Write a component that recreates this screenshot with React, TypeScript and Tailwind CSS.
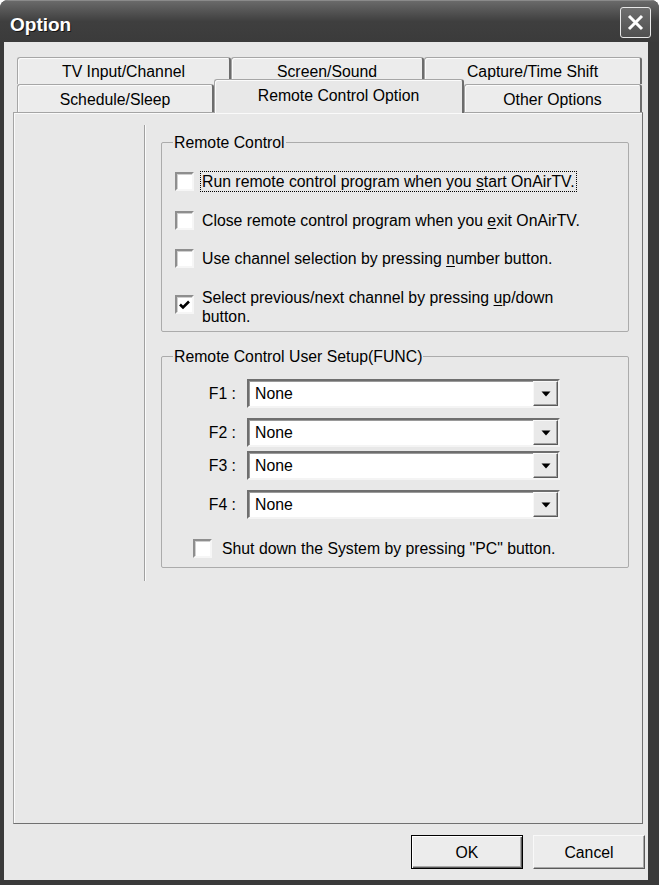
import React from 'react';

const font = "font-['Liberation_Sans',Arial,sans-serif]";

function CheckBox({ checked = false, className = "" }: { checked?: boolean; className?: string }) {
  return (
    <span className={`w-[19px] h-[19px] shrink-0 bg-white border-2 border-t-[#8e8e8e] border-l-[#8e8e8e] border-b-[#f6f6f6] border-r-[#f6f6f6] shadow-[inset_1px_1px_0_#cfcfcf] flex items-center justify-center ${className}`}>
      {checked && (
        <svg width="11" height="10" viewBox="0 0 11 10">
          <path d="M1 4.5 L4 7.5 L10 1.5" fill="none" stroke="#000" strokeWidth="2.6" />
        </svg>
      )}
    </span>
  );
}

function Combo({ label }: { label: string }) {
  return (
    <div className="flex items-center">
      <span className="w-[75px] text-right pr-[1px]">{label}</span>
      <div className="ml-[10px] w-[313px] h-[29px] flex bg-white border-2 border-t-[#6e6e6e] border-l-[#6e6e6e] border-b-[#f4f4f4] border-r-[#f4f4f4] shadow-[inset_1px_1px_0_#9a9a9a]">
        <span className="flex-1 flex items-center pl-[6px]">None</span>
        <span className="w-[25px] h-full bg-[#e9e9e9] border border-t-[#f8f8f8] border-l-[#f8f8f8] border-b-[#5a5a5a] border-r-[#5a5a5a] shadow-[inset_-1px_-1px_0_#a0a0a0] flex items-center justify-center">
          <svg width="10" height="6" viewBox="0 0 10 6">
            <path d="M0.5 0.5 L9.5 0.5 L5 5.5 Z" fill="#000" />
          </svg>
        </span>
      </div>
    </div>
  );
}

const tab = "h-full flex items-center justify-center bg-[#ececec] border-t border-l border-[#a6a6a6] border-r-2 border-r-[#6c6c6c] rounded-t-[3px] shadow-[inset_1px_1px_0_#fbfbfb]";

export default function App() {
  return (
    <div className={`w-[659px] h-[885px] bg-white ${font} text-[15.8px] leading-[19px] text-black`}>
      <div className="h-full flex flex-col rounded-t-[8px] overflow-hidden bg-[#3a3a3a]">
        {/* Title bar */}
        <div className="h-[42px] shrink-0 flex items-center justify-between pl-[10px] pr-[8px] bg-gradient-to-b from-[#6a6a6a] via-[#3f3f3f] to-[#3b3b3b] border-t border-[#8a8a8a]">
          <span className="pt-[5px] text-[19px] font-bold text-white [text-shadow:1px_1px_0_#151515]">Option</span>
          <span className="w-[31px] h-[31px] mt-[2px] rounded-[3px] border border-[#e8e8e8] bg-gradient-to-b from-[#6e6e6e] to-[#505050] flex items-center justify-center">
            <svg width="19" height="19" viewBox="0 0 19 19">
              <path d="M3 3 L16 16 M16 3 L3 16" stroke="#fff" strokeWidth="3" />
            </svg>
          </span>
        </div>

        {/* Body */}
        <div className="flex-1 flex flex-col ml-[4px] mr-[11px] mb-[5px] bg-[#e8e8e8] pt-[15px] pl-[9px] pr-[5px] pb-[11px]">
          {/* Tabs */}
          <div className="flex h-[27px] pl-[4px]">
            <div className={`${tab} w-[214px]`}>TV Input/Channel</div>
            <div className={`${tab} w-[193px]`}>Screen/Sound</div>
            <div className={`${tab} w-[218px]`}>Capture/Time Shift</div>
          </div>
          <div className="flex items-end h-[29px] pl-[4px] -mb-px">
            <div className={`${tab} w-[197px]`}>Schedule/Sleep</div>
            <div className="relative z-10 w-[250px] h-[34px] flex items-center justify-center pb-[3px] bg-[#e8e8e8] border-t border-l border-[#a6a6a6] border-r-2 border-r-[#6c6c6c] rounded-t-[3px] shadow-[inset_1px_1px_0_#fbfbfb]">
              Remote Control Option
            </div>
            <div className={`${tab} w-[178px]`}>Other Options</div>
          </div>

          {/* Panel */}
          <div className="flex-1 flex items-start border border-[#a4a4a4] border-r-[#707070] border-b-[#707070] shadow-[inset_1px_1px_0_#fafafa] pt-[12px]">
            <div className="w-[130px] shrink-0" />
            <div className="w-[2px] h-[456px] shrink-0 border-l border-[#a0a0a0] bg-[#fafafa]" />
            <div className="pl-[15px] pt-[8px] w-[483px] shrink-0">
              <fieldset className="w-[468px] border border-[#ababab] rounded-[2px] pb-[5px]">
                <legend className="ml-[11px] px-[1px] leading-[19px]">Remote Control</legend>
                <div className="mt-[19px] flex items-center gap-[8px] pl-[13px]">
                  <CheckBox />
                  <span className="border border-dotted border-black px-[1px] -ml-[2px]">
                    Run remote control program when you <span className="underline underline-offset-2">s</span>tart OnAirTV.
                  </span>
                </div>
                <div className="mt-[19px] flex items-center gap-[8px] pl-[13px]">
                  <CheckBox />
                  <span>
                    Close remote control program when you <span className="underline underline-offset-2">e</span>xit OnAirTV.
                  </span>
                </div>
                <div className="mt-[19px] flex items-center gap-[8px] pl-[13px]">
                  <CheckBox />
                  <span>
                    Use channel selection by pressing <span className="underline underline-offset-2">n</span>umber button.
                  </span>
                </div>
                <div className="mt-[20px] flex items-start gap-[8px] pl-[13px]">
                  <CheckBox checked className="mt-[7px]" />
                  <span className="w-[400px]">
                    Select previous/next channel by pressing <span className="underline underline-offset-2">u</span>p/down
                    <br />
                    button.
                  </span>
                </div>
              </fieldset>

              <fieldset className="mt-[15px] w-[468px] border border-[#ababab] rounded-[2px] pb-[9px]">
                <legend className="ml-[11px] px-[1px] leading-[19px]">Remote Control User Setup(FUNC)</legend>
                <div className="mt-[13px]"><Combo label="F1 :" /></div>
                <div className="mt-[10px]"><Combo label="F2 :" /></div>
                <div className="mt-[4px]"><Combo label="F3 :" /></div>
                <div className="mt-[10px]"><Combo label="F4 :" /></div>
                <div className="mt-[20px] flex items-center gap-[10px] pl-[31px]">
                  <CheckBox />
                  <span>Shut down the System by pressing "PC" button.</span>
                </div>
              </fieldset>
            </div>
          </div>

          {/* Buttons */}
          <div className="mt-[11px] flex justify-end gap-[10px] -mr-[2px]">
            <button className="w-[112px] h-[34px] border border-black bg-[#ececec] shadow-[inset_1px_1px_0_#fff,inset_-1px_-1px_0_#5a5a5a,inset_-2px_-2px_0_#a8a8a8]">OK</button>
            <button className="w-[112px] h-[34px] border border-[#f8f8f8] border-r-[#5a5a5a] border-b-[#5a5a5a] bg-[#ececec] shadow-[inset_-1px_-1px_0_#a8a8a8]">Cancel</button>
          </div>
        </div>
      </div>
    </div>
  );
}
